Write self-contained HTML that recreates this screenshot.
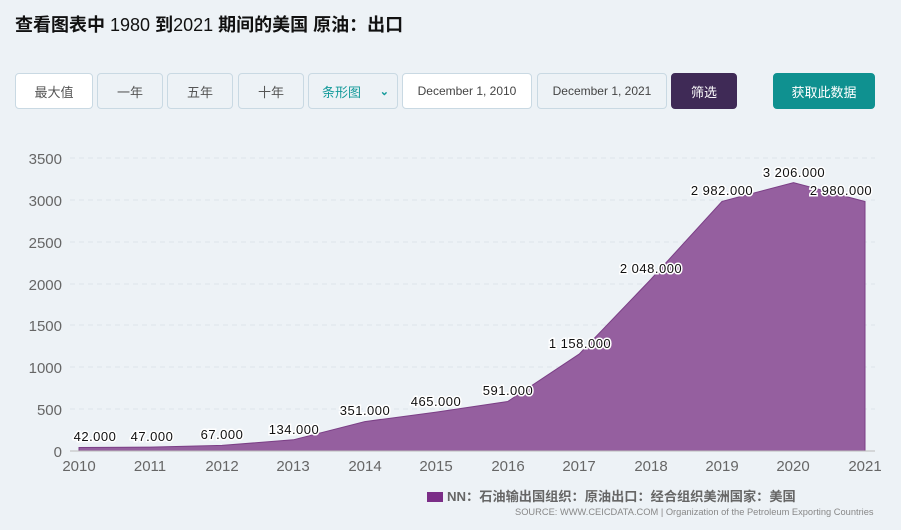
<!DOCTYPE html>
<html><head><meta charset="utf-8"><style>
body{margin:0;width:901px;height:530px;background:#edf2f6;font-family:"Liberation Sans","Noto Sans CJK SC",sans-serif;position:relative;overflow:hidden}
h1{position:absolute;left:15px;top:11px;margin:0;font-size:18px;font-weight:bold;color:#111}
h1 span{font-weight:normal}
.b{position:absolute;top:73px;height:36px;border:1px solid #c9d9e3;border-radius:4px;box-sizing:border-box;display:flex;align-items:center;justify-content:center;font-size:13px;color:#555;background:#edf2f6}
</style></head><body>
<h1>查看图表中 <span>1980</span> 到<span>2021</span> 期间的美国 原油：出口</h1>
<div class="b" style="left:15px;width:78px;background:#fff">最大值</div>
<div class="b" style="left:97px;width:66px">一年</div>
<div class="b" style="left:167px;width:66px">五年</div>
<div class="b" style="left:238px;width:66px">十年</div>
<div class="b" style="left:308px;width:90px;color:#139a9a;justify-content:flex-start;padding-left:13px">条形图<span style="position:absolute;right:8px;font-size:11px;font-weight:bold">&#8964;</span></div>
<div class="b" style="left:402px;width:130px;background:#fff;font-size:12px;color:#444">December 1, 2010</div>
<div class="b" style="left:537px;width:130px;font-size:12px;color:#444">December 1, 2021</div>
<div class="b" style="left:671px;width:66px;background:#3f2a56;border-color:#3f2a56;color:#fff">筛选</div>
<div class="b" style="left:773px;width:102px;background:#0f9190;border-color:#0f9190;color:#fff">获取此数据</div>
<svg width="901" height="530" style="position:absolute;left:0;top:0" font-family="Liberation Sans, sans-serif">
<g stroke="#dde4ea" stroke-dasharray="5,4">
<line x1="70" x2="875" y1="158" y2="158"/><line x1="70" x2="875" y1="200" y2="200"/><line x1="70" x2="875" y1="242" y2="242"/><line x1="70" x2="875" y1="284" y2="284"/><line x1="70" x2="875" y1="325" y2="325"/><line x1="70" x2="875" y1="367" y2="367"/><line x1="70" x2="875" y1="409" y2="409"/>
</g>
<g fill="#666" font-size="15" text-anchor="end">
<text x="62" y="164">3500</text><text x="62" y="206">3000</text><text x="62" y="248">2500</text><text x="62" y="290">2000</text><text x="62" y="331">1500</text><text x="62" y="373">1000</text><text x="62" y="415">500</text><text x="62" y="457">0</text>
</g>
<path d="M79,447.5 L150.5,447.1 L222,445.4 L293.4,439.8 L364.8,421.6 L436.3,412.1 L507.7,401.5 L579.2,354.1 L650.6,279.6 L722,201.4 L793.5,182.6 L865,201.5 L865,451 L79,451Z" fill="#955f9f" stroke="#7b3f86" stroke-width="1"/>
<line x1="70" x2="875" y1="451" y2="451" stroke="#bbb"/>
<g fill="#666" font-size="15" text-anchor="middle">
<text x="79" y="471">2010</text><text x="150" y="471">2011</text><text x="222" y="471">2012</text><text x="293" y="471">2013</text><text x="365" y="471">2014</text><text x="436" y="471">2015</text><text x="508" y="471">2016</text><text x="579" y="471">2017</text><text x="651" y="471">2018</text><text x="722" y="471">2019</text><text x="793" y="471">2020</text><text x="865" y="471">2021</text>
</g>
<g font-size="13" fill="#111" text-anchor="middle" stroke="#fff" stroke-width="3" paint-order="stroke" letter-spacing="0.5">
<text x="95" y="441">42.000</text><text x="152" y="441">47.000</text><text x="222" y="439">67.000</text><text x="294" y="434">134.000</text><text x="365" y="415">351.000</text><text x="436" y="406">465.000</text><text x="508" y="395">591.000</text><text x="580" y="348">1 158.000</text><text x="651" y="273">2 048.000</text><text x="722" y="195">2 982.000</text><text x="794" y="177">3 206.000</text><text x="841" y="195">2 980.000</text>
</g>
<rect x="427" y="492" width="16" height="10" fill="#7b2e87"/>
<text x="447" y="501" font-size="13.2" font-weight="bold" fill="#666" font-family="Liberation Sans, Noto Sans CJK SC, sans-serif">NN：石油输出国组织：原油出口：经合组织美洲国家：美国</text>
<text x="515" y="515" font-size="9.3" fill="#888">SOURCE: WWW.CEICDATA.COM | Organization of the Petroleum Exporting Countries</text>
</svg>
</body></html>
